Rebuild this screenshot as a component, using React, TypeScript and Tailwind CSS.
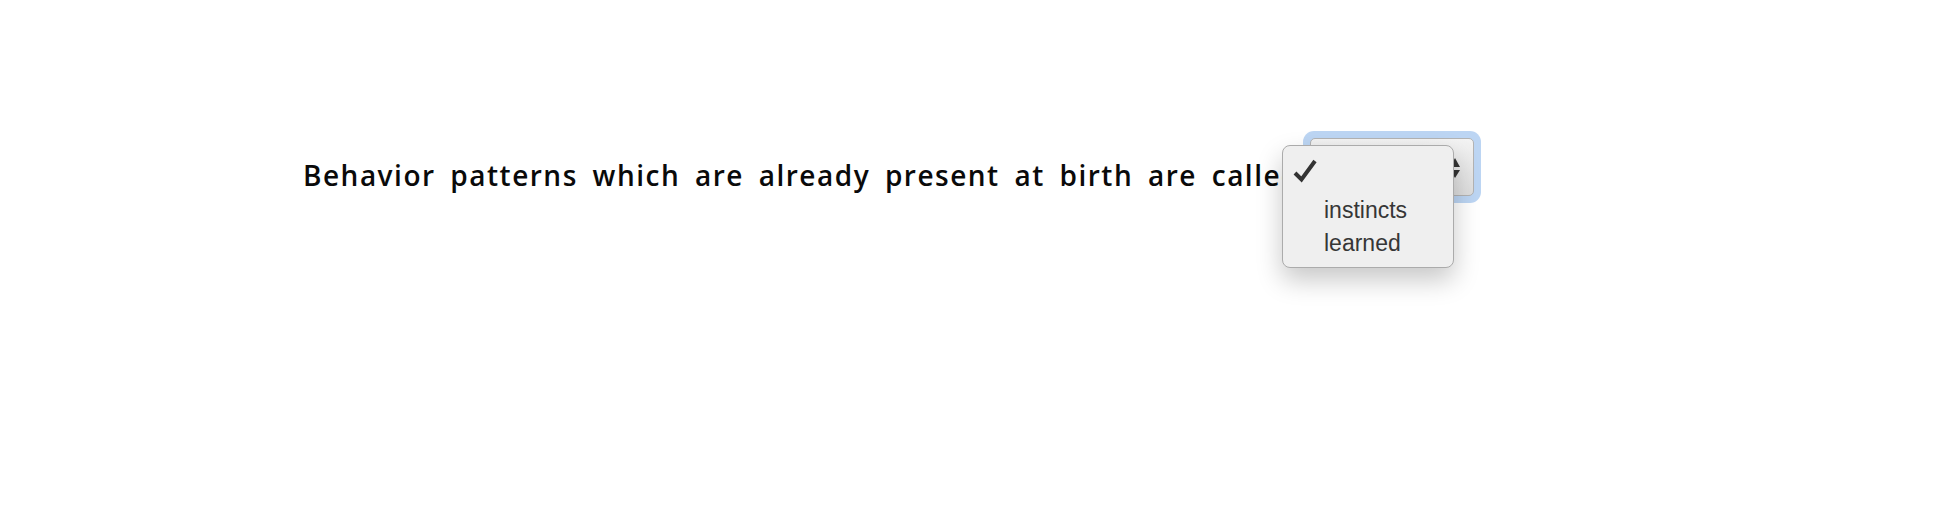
export default function App() {
  return (
    <div className="min-h-[510px] bg-white">
      <div className="flex items-start pl-[303px] pt-[131px]">
        <p
          className="w-[1000px] shrink-0 whitespace-nowrap mt-[30px] text-[28px] leading-[28px] font-semibold text-[#0a0a0a] tracking-[1.5px] [word-spacing:6px]"
          style={{ fontFamily: '"Open Sans", "Noto Sans", sans-serif' }}
        >
          Behavior patterns which are already present at birth are called
        </p>

        <div className="relative">
          {/* select with focus ring */}
          <div className="w-[178px] h-[72px] rounded-[11px] bg-[#bcd5f3] p-[7px]">
            <div className="relative h-full rounded-[5px] border border-[#b3b3b3] bg-gradient-to-b from-[#f3f3f3] to-[#dddddd]">
              <div className="absolute right-[13px] top-[19px] flex flex-col items-center gap-[3px]">
                <svg width="10" height="9" viewBox="0 0 10 9">
                  <polygon points="5,0 10,9 0,9" fill="#333" />
                </svg>
                <svg width="10" height="8" viewBox="0 0 10 8">
                  <polygon points="0,0 10,0 5,8" fill="#333" />
                </svg>
              </div>
            </div>
          </div>

          {/* open option list */}
          <div
            className="absolute left-[-21px] top-[14px] w-[172px] h-[123px] rounded-[8px] border border-[#ababab] bg-[#efefef] pt-[15px] pb-[7px] shadow-[0_12px_26px_rgba(0,0,0,0.22)] text-[23px] leading-[33px] text-[#363636]"
            style={{ fontFamily: '"Liberation Sans", Arial, sans-serif' }}
          >
            <div className="flex items-start h-[33px]">
              <svg className="ml-[9px] mt-[-2px]" width="26" height="24" viewBox="0 0 26 24">
                <polyline points="3,14 9.5,20.5 23,2" fill="none" stroke="#333" strokeWidth="4" />
              </svg>
            </div>
            <div className="h-[33px] pl-[41px]">instincts</div>
            <div className="h-[33px] pl-[41px]">learned</div>
          </div>
        </div>
      </div>
    </div>
  )
}
